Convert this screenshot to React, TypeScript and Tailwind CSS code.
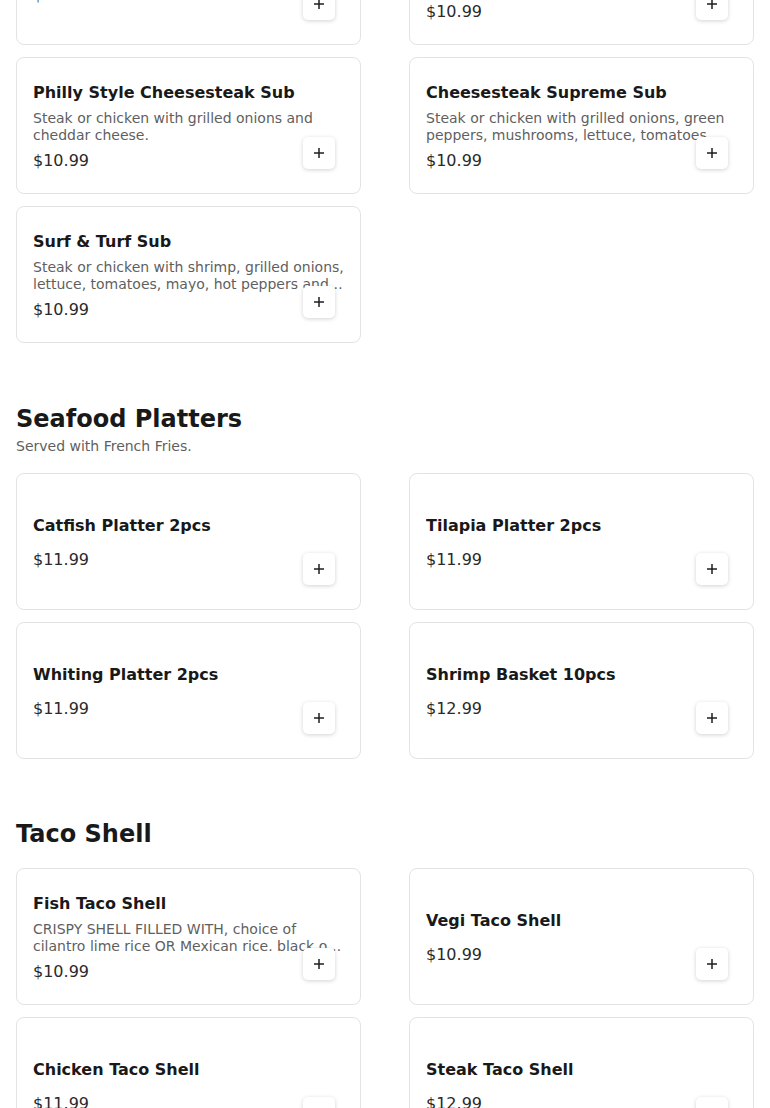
import React from "react";

type Item = { name: string; desc?: string; price: string };

const PlusIcon = () => (
  <svg width="12" height="12" viewBox="0 0 12 12" fill="none">
    <path d="M6 1v10M1 6h10" stroke="#1f1f1f" strokeWidth="1.5" />
  </svg>
);

function Card({ item }: { item: Item }) {
  return (
    <div className="relative h-[137px] rounded-lg border border-[#e3e3e3] bg-white">
      <div className="flex h-full flex-col justify-center px-4 pt-[2px]">
        <div className="text-base font-bold leading-6 text-[#191919] truncate">{item.name}</div>
        {item.desc && (
          <div className="mt-[5px] text-sm leading-[17px] text-[#5f5f5f] line-clamp-2">{item.desc}</div>
        )}
        <div className={`text-base leading-6 text-[#2a2a2a] ${item.desc ? "mt-[5px]" : "mt-[10px]"}`}>{item.price}</div>
      </div>
      <button className="absolute bottom-6 right-[25px] z-10 flex h-8 w-8 items-center justify-center rounded-[5px] bg-white shadow-[0_1px_4px_rgba(0,0,0,0.18)]">
        <PlusIcon />
      </button>
    </div>
  );
}

function Grid({ items, className = "" }: { items: Item[]; className?: string }) {
  return (
    <div className={`grid grid-cols-2 gap-x-12 gap-y-3 ${className}`}>
      {items.map((it, i) => (
        <Card key={i} item={it} />
      ))}
    </div>
  );
}

const subs: Item[] = [
  { name: "Chicken Sub", price: "$10.99" },
  {
    name: "Steak Sub",
    desc: "Steak or chicken with grilled onions, lettuce, tomatoes, mayo and cheese.",
    price: "$10.99",
  },
  {
    name: "Philly Style Cheesesteak Sub",
    desc: "Steak or chicken with grilled onions and cheddar cheese.",
    price: "$10.99",
  },
  {
    name: "Cheesesteak Supreme Sub",
    desc: "Steak or chicken with grilled onions, green peppers, mushrooms, lettuce, tomatoes, mayo and cheese.",
    price: "$10.99",
  },
  {
    name: "Surf & Turf Sub",
    desc: "Steak or chicken with shrimp, grilled onions, lettuce, tomatoes, mayo, hot peppers and cheese.",
    price: "$10.99",
  },
];

const platters: Item[] = [
  { name: "Catfish Platter 2pcs", price: "$11.99" },
  { name: "Tilapia Platter 2pcs", price: "$11.99" },
  { name: "Whiting Platter 2pcs", price: "$11.99" },
  { name: "Shrimp Basket 10pcs", price: "$12.99" },
];

const tacos: Item[] = [
  {
    name: "Fish Taco Shell",
    desc: "CRISPY SHELL FILLED WITH, choice of cilantro lime rice OR Mexican rice. black or pinto beans, lettuce, pico de gallo, cheese and sour cream.",
    price: "$10.99",
  },
  { name: "Vegi Taco Shell", price: "$10.99" },
  { name: "Chicken Taco Shell", price: "$11.99" },
  { name: "Steak Taco Shell", price: "$12.99" },
];

export default function App() {
  return (
    <div className="min-h-screen bg-white px-4 pb-10 font-['DejaVu_Sans',sans-serif] text-[#191919]">
      <Grid items={subs} className="-mt-[92px]" />

      <section className="mt-[58px]">
        <h2 className="text-2xl font-bold leading-9 text-[#191919]">Seafood Platters</h2>
        <p className="-mt-[1px] text-sm leading-5 text-[#5f5f5f]">Served with French Fries.</p>
        <Grid items={platters} className="mt-[17px]" />
      </section>

      <section className="mt-[57px]">
        <h2 className="text-2xl font-bold leading-9 text-[#191919]">Taco Shell</h2>
        <Grid items={tacos} className="mt-[16px]" />
      </section>
    </div>
  );
}
